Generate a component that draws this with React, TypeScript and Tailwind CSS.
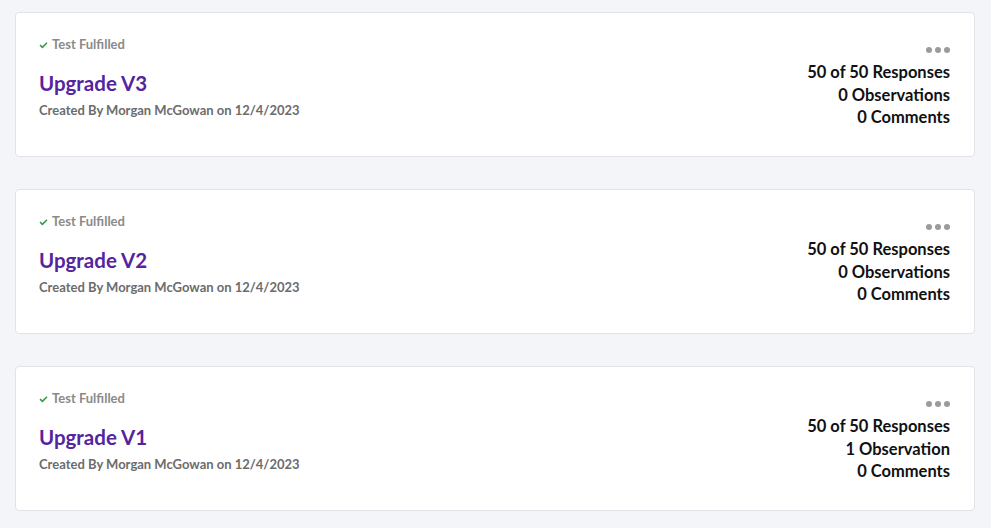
import { Check } from 'lucide-react';

interface TestRun {
    name: string;
    responses: string;
    observations: string;
    comments: string;
}

const RUNS: TestRun[] = [
    { name: 'Upgrade V3', responses: '50 of 50 Responses', observations: '0 Observations', comments: '0 Comments' },
    { name: 'Upgrade V2', responses: '50 of 50 Responses', observations: '0 Observations', comments: '0 Comments' },
    { name: 'Upgrade V1', responses: '50 of 50 Responses', observations: '1 Observation', comments: '0 Comments' },
];

function RunCard({ run }: { run: TestRun }) {
    return (
        <div className="bg-white border border-[#e1e3e8] rounded-[4px] h-[145px] pl-[23px] pr-6 pt-6 flex justify-between">
            <div>
                <div className="flex items-center gap-[4px] h-4 text-[13px] font-bold text-[#8a8a8a]">
                    <Check size={9} strokeWidth={4.5} className="text-[#3c9a4c]" />
                    Test Fulfilled
                </div>
                <div className="mt-4 text-[20.5px] leading-7 font-bold text-[#55249f]">{run.name}</div>
                <div className="mt-[4px] text-[13px] leading-[18px] font-bold text-[#6c6c6c]">
                    Created By Morgan McGowan on 12/4/2023
                </div>
            </div>
            <div className="flex flex-col items-end">
                <div className="h-[24px] flex items-center gap-[3px] pt-[2px]">
                    <span className="w-[6px] h-[6px] rounded-full bg-[#9b9b9b]" />
                    <span className="w-[6px] h-[6px] rounded-full bg-[#9b9b9b]" />
                    <span className="w-[6px] h-[6px] rounded-full bg-[#9b9b9b]" />
                </div>
                <div className="text-[16.5px] leading-[22.5px] font-bold text-[#111] text-right">
                    <div>{run.responses}</div>
                    <div>{run.observations}</div>
                    <div>{run.comments}</div>
                </div>
            </div>
        </div>
    );
}

export default function App() {
    return (
        <div className="min-h-[528px] bg-[#f4f5f8] pt-3 pl-[15px] pr-4 pb-4 flex flex-col gap-8 font-['Lato',sans-serif]">
            {RUNS.map((run) => (
                <RunCard key={run.name} run={run} />
            ))}
        </div>
    );
}
